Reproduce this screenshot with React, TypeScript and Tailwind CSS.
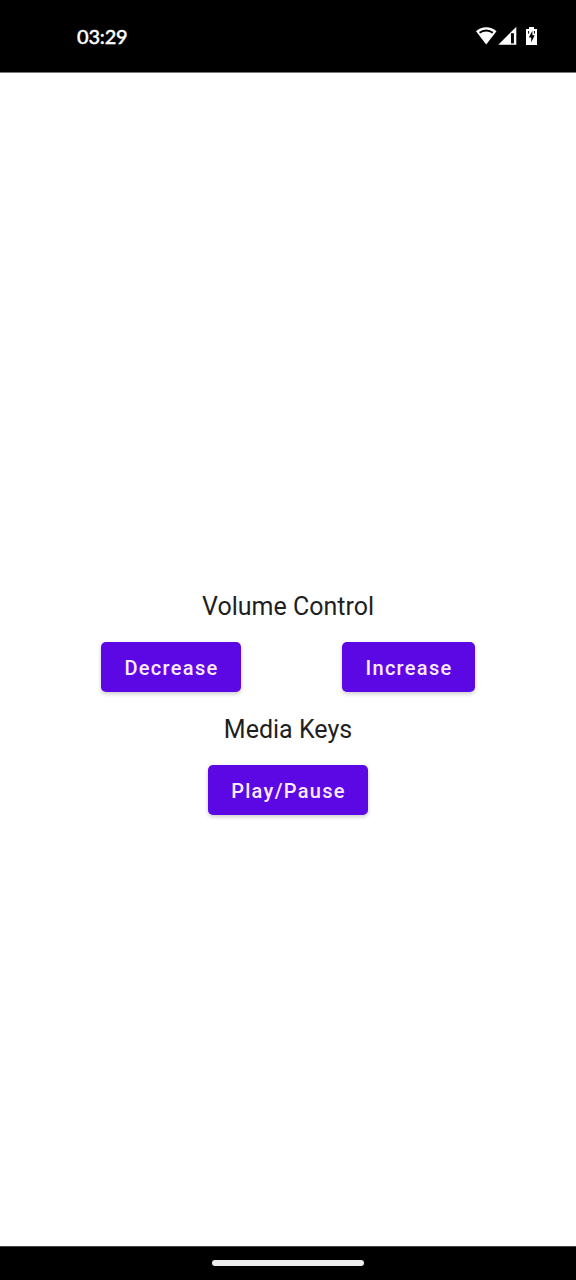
import React from "react";

function StatusIcons() {
  return (
    <svg width="64" height="24" viewBox="0 0 64 24" fill="#fff" aria-hidden="true">
      <path d="M1 7.2C6.5 1.9 16 1.9 21.5 7.2L11.2 20.5Z" />
      <path d="M4.6 8.8C8.4 5.7 14 5.7 17.8 8.8" fill="none" stroke="#000" strokeWidth="1.8" />
      <path d="M23.3 20.7H41.3V2.8Z" />
      <path d="M36 9.2h2.9v10.2H36z" fill="#000" />
      <path d="M54 3h5v2h3v16H51V5h3z" />
      <path d="M53.6 7v2.6M59.4 7v2.6" stroke="#000" strokeWidth="1" />
      <path d="M57.4 6.8l-3.6 6.6h2.4v5.2l3.5-7.4h-2.3z" fill="#000" />
    </svg>
  );
}

function Button({ label, width }: { label: string; width: string }) {
  return (
    <button
      className={`${width} flex h-[50px] items-center justify-center rounded-[5px] bg-[#5b08e5] pt-[2px] pl-[1px] text-[20px] font-medium tracking-[1.3px] text-[#fdeaff] shadow-[0_2px_4px_rgba(0,0,0,0.2)]`}
    >
      {label}
    </button>
  );
}

export default function App() {
  return (
    <div className="flex h-[1280px] w-[576px] flex-col bg-white font-['Roboto',sans-serif] text-[#1f1f1f]">
      <header className="flex h-[72px] items-center justify-between bg-black pr-[37px] pl-[77px] text-white">
        <span className="pb-[1px] font-['Lato',sans-serif] text-[20px] font-medium tracking-[-0.2px] [-webkit-text-stroke:0.4px_white]">03:29</span>
        <StatusIcons />
      </header>
      <main className="flex flex-1 flex-col items-center border-t border-[#777] pt-[516px]">
        <h1 className="h-[53px] text-[25px] leading-[36px]">Volume Control</h1>
        <div className="flex w-full justify-between pr-[101px] pl-[101px]">
          <Button label="Decrease" width="w-[140px]" />
          <Button label="Increase" width="w-[133px]" />
        </div>
        <h2 className="mt-[20px] h-[53px] text-[25px] leading-[36px]">Media Keys</h2>
        <Button label="Play/Pause" width="w-[160px]" />
      </main>
      <footer className="flex h-[34px] justify-center border-t border-[#444] bg-black pt-[13px]">
        <div className="h-[6px] w-[152px] rounded-full bg-[#eee]" />
      </footer>
    </div>
  );
}
